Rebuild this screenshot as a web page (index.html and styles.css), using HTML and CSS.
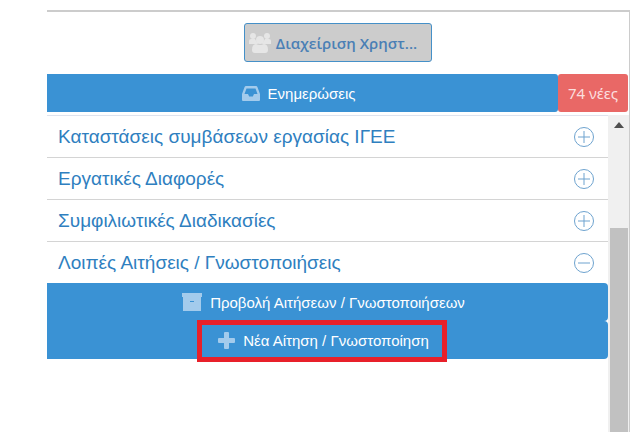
FILE: index.html
```html
<!DOCTYPE html>
<html lang="el">
<head>
  <meta charset="UTF-8">
  <meta name="viewport" content="width=device-width, initial-scale=1.0">
  <title>Ενημερώσεις</title>
  <link rel="stylesheet" href="styles.css">
</head>
<body>

  <main class="panel">
    <div class="panel-top">
      <button type="button" class="users-btn">
        <svg width="22" height="20" viewBox="0 0 22 20" fill="currentColor" aria-hidden="true">
          <circle cx="4" cy="3" r="3"/>
          <circle cx="18" cy="3" r="3"/>
          <path d="M0 11V8q0-2 2-2h4l3 5zM22 11V8q0-2-2-2h-4l-3 5z"/>
          <circle cx="11" cy="7" r="4"/>
          <path d="M3 17q0-6 4-6 4 2 8 0 4 0 4 6 0 3-3 3H6q-3 0-3-3z"/>
        </svg>
        <span>Διαχείριση Χρηστ...</span>
      </button>
    </div>

    <div class="news">
      <button type="button" class="btn news-btn">
        <svg width="18" height="15" viewBox="0 0 18 15" fill="currentColor" aria-hidden="true">
          <path fill-rule="evenodd" d="M4 0h10q1 0 1.400 1L18 8v6q0 1-1 1H1q-1 0-1-1V8l2.600-7Q3 0 4 0zM4.500 2.500L2.500 8H6l1.200 2.500h3.600L12 8h3.500l-2-5.500z"/>
        </svg>
        <span>Ενημερώσεις</span>
      </button>
      <a href="#" class="badge">74 νέες</a>
    </div>

    <div class="content">
      <div class="list">
        <button type="button" class="row" aria-expanded="false">
          <span>Καταστάσεις συμβάσεων εργασίας ΙΓΕΕ</span>
          <svg width="22" height="22" viewBox="0 0 22 22" aria-hidden="true"><circle cx="11" cy="11" r="9.500"/><path d="M5 11h12M11 5v12"/></svg>
        </button>
        <button type="button" class="row" aria-expanded="false">
          <span>Εργατικές Διαφορές</span>
          <svg width="22" height="22" viewBox="0 0 22 22" aria-hidden="true"><circle cx="11" cy="11" r="9.500"/><path d="M5 11h12M11 5v12"/></svg>
        </button>
        <button type="button" class="row" aria-expanded="false">
          <span>Συμφιλιωτικές Διαδικασίες</span>
          <svg width="22" height="22" viewBox="0 0 22 22" aria-hidden="true"><circle cx="11" cy="11" r="9.500"/><path d="M5 11h12M11 5v12"/></svg>
        </button>
        <button type="button" class="row" aria-expanded="true">
          <span>Λοιπές Αιτήσεις / Γνωστοποιήσεις</span>
          <svg width="22" height="22" viewBox="0 0 22 22" aria-hidden="true"><circle cx="11" cy="11" r="9.500"/><path d="M5 11h12"/></svg>
        </button>
        <div class="actions">
          <button type="button" class="btn">
            <svg width="20" height="18" viewBox="0 0 20 18" fill="currentColor" aria-hidden="true">
              <path fill-rule="evenodd" d="M0 0h20v4H0zM1 4h18v14H1zM8 8v1h4V8z"/>
            </svg>
            <span>Προβολή Αιτήσεων / Γνωστοποιήσεων</span>
          </button>
          <button type="button" class="btn">
            <svg width="17" height="17" viewBox="0 0 17 17" fill="currentColor" aria-hidden="true">
              <path d="M6 1q0-1 1-1h3q1 0 1 1v5h5q1 0 1 1v3q0 1-1 1h-5v5q0 1-1 1H7q-1 0-1-1v-5H1q-1 0-1-1V7q0-1 1-1h5z"/>
            </svg>
            <span>Νέα Αίτηση / Γνωστοποίηση</span>
            <i class="highlight"></i>
          </button>
        </div>
      </div>
      <div class="scrollbar">
        <svg class="arrow" width="10" height="6" viewBox="0 0 10 6" aria-hidden="true"><path d="M0 6l5-6 5 6z"/></svg>
        <div class="thumb"></div>
      </div>
    </div>
  </main>

</body>
</html>
```

FILE: styles.css
```css
* {
  box-sizing: border-box;
}

body {
  margin: 0;
  padding: 10px 10px 14px 47px;
  min-height: 100vh;
  display: flex;
  background: #fff;
  font-family: "Liberation Sans", Arial, sans-serif;
}

button {
  margin: 0;
  border: none;
  font-family: inherit;
  cursor: pointer;
}

.panel {
  flex: 1;
  display: flex;
  flex-direction: column;
  border-top: 2px solid #ccc;
  border-right: 1px solid #ccc;
}

.panel-top {
  display: flex;
  justify-content: center;
  padding: 11px 0 12px;
}

.users-btn {
  height: 39px;
  display: flex;
  align-items: center;
  gap: 5px;
  padding: 0 14px 0 4px;
  border: 1px solid #4590c8;
  border-radius: 3px;
  background: #ccc;
  color: #4a7fb5;
  font: 600 15px "Open Sans", "Noto Sans", sans-serif;
}

.users-btn svg {
  color: #e6e6e6;
}

.news {
  display: flex;
  padding-right: 1px;
}

.btn {
  position: relative;
  width: 100%;
  height: 38px;
  display: flex;
  align-items: center;
  justify-content: center;
  gap: 8px;
  padding: 0 12px 0 4px;
  background: #3a92d4;
  color: #fff;
  font-size: 15px;
}

.btn svg {
  color: #a3cbec;
}

.news-btn {
  flex: 1;
  border-radius: 0 3px 3px 0;
}

.badge {
  width: 70px;
  display: flex;
  align-items: center;
  justify-content: center;
  border-radius: 3px;
  background: #e96866;
  color: #fbdede;
  font-family: "Noto Sans", sans-serif;
  font-size: 15px;
  text-decoration: none;
}

.content {
  flex: 1;
  display: flex;
  padding-top: 3px;
}

.list {
  flex: 1;
  border-top: 1px solid #dfe3ee;
}

.row {
  width: 100%;
  height: 42px;
  display: flex;
  align-items: center;
  justify-content: space-between;
  padding: 0 13px 0 11px;
  border-bottom: 1px solid #d4d4d4;
  background: #fff;
  color: #2f7fbf;
  font-size: 19px;
  text-align: left;
}

.row[aria-expanded="true"] {
  height: 41px;
  border-bottom: none;
}

.row svg {
  fill: none;
  stroke: #6ea3cf;
  stroke-width: 1;
}

.actions .btn {
  border-radius: 0 4px 4px 0;
}

.highlight {
  position: absolute;
  top: -1px;
  bottom: -3px;
  left: 50%;
  width: 250px;
  margin-left: -131px;
  border: 5px solid #e8202a;
}

.scrollbar {
  width: 21px;
  display: flex;
  flex-direction: column;
  align-items: center;
  padding-top: 7px;
  background: #f0f0f0;
}

.arrow {
  fill: #505050;
}

.thumb {
  flex: 1;
  width: 18px;
  margin-top: 100px;
  background: #c1c1c1;
}
```
